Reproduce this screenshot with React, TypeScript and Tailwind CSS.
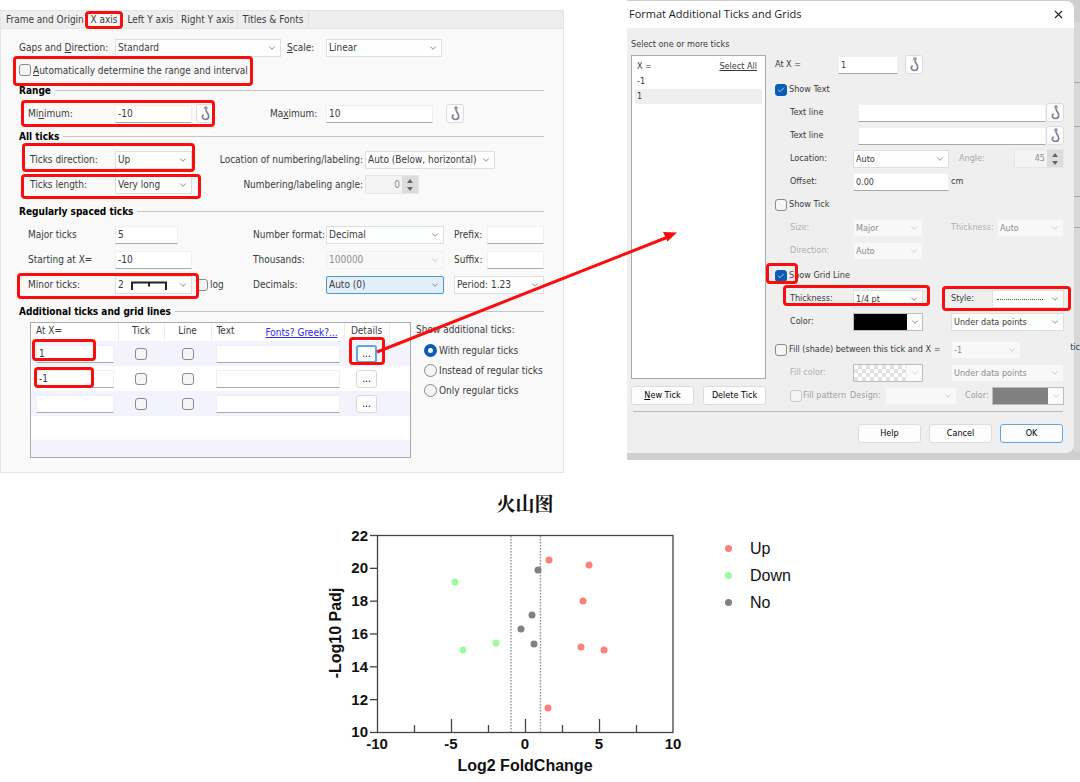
import * as React from 'react'
import clsx from 'clsx'
import { Check, ChevronDown, X } from 'lucide-react'

function Mark({ className }: { className?: string }) {
  return (
    <span
      className={clsx('pointer-events-none absolute z-10 rounded-[4px] border-3 border-[#fb0d0d]', className)}
    />
  )
}

function Hook() {
  return (
    <svg viewBox="0 0 12 16" className="h-[15px] w-[11px]" fill="none" stroke="#7b8098" strokeWidth="1.8">
      <circle cx="6.5" cy="2" r="1.2" strokeWidth="1.3" />
      <path d="M6.500 3.500c0 3 3 4.500 3 7.500c0 2.200-1.500 3.500-3.500 3.500S2.500 13.300 2.500 11.500c0-1 .6-1.700 1.700-1.700" />
    </svg>
  )
}

function HookButton({ label, className }: { label: string; className?: string }) {
  return (
    <button
      aria-label={label}
      className={clsx(
        'flex h-[19px] w-[18px] shrink-0 items-center justify-center rounded-[3px] border border-[#dcdcdc] bg-[#fdfdfd]',
        className
      )}
    >
      <Hook />
    </button>
  )
}

type SelectProps = {
  id?: string
  label?: string
  value: string
  className?: string
  disabled?: boolean
  active?: boolean
}

function Select({ id, label, value, className, disabled, active }: SelectProps) {
  return (
    <div className={clsx('relative', className)}>
      <select
        id={id}
        aria-label={label}
        disabled={disabled}
        className={clsx(
          'block h-[18px] w-full appearance-none border pr-4 pl-0.5 leading-4 opacity-100',
          active && 'rounded-[2px] border-[#4a97d6] bg-[#e2eefa]',
          disabled && 'border-[#f0f0f0] bg-[#f8f8f8] text-[#8d8d8d]',
          !active && !disabled && 'border-[#dedede] bg-[#fdfefe]'
        )}
      >
        <option>{value}</option>
      </select>
      <ChevronDown
        className={clsx(
          'pointer-events-none absolute top-1 right-1 size-[10px]',
          disabled ? 'text-[#c4c4c4]' : 'text-[#777777]'
        )}
      />
    </div>
  )
}

type TextBoxProps = { id?: string; label?: string; value?: string; className?: string }

function TextBox({ id, label, value, className }: TextBoxProps) {
  return (
    <input
      id={id}
      aria-label={label}
      type="text"
      defaultValue={value}
      className={clsx(
        'h-[18px] min-w-0 border border-b-[#a9a9a9] border-x-[#f0f0f0] border-t-[#f0f0f0] bg-white px-0.5',
        className
      )}
    />
  )
}

function Spinner({ id, value, className }: { id: string; value: string; className?: string }) {
  return (
    <div className={clsx('flex h-[19px] border border-[#e6e6e6]', className)}>
      <input
        id={id}
        type="text"
        disabled
        defaultValue={value}
        className="min-w-0 flex-1 bg-[#f4f4f4] pr-0.5 text-right text-[#8d8d8d]"
      />
      <div className="flex w-4 flex-col items-center justify-center gap-1 bg-[#dcdcdc]">
        <svg viewBox="0 0 6 4" className="h-1 w-1.5" fill="#666666">
          <path d="M0 4h6L3 0z" />
        </svg>
        <svg viewBox="0 0 6 4" className="h-1 w-1.5" fill="#666666">
          <path d="M0 0h6L3 4z" />
        </svg>
      </div>
    </div>
  )
}

type TickBoxProps = { id?: string; label?: string; checked?: boolean; disabled?: boolean }

function TickBox({ id, label, checked, disabled }: TickBoxProps) {
  return (
    <span className="relative flex size-3 shrink-0">
      <input
        id={id}
        aria-label={label}
        type="checkbox"
        defaultChecked={checked}
        disabled={disabled}
        className={clsx(
          'size-3 appearance-none rounded-[3px] border bg-[#f5f5f5] checked:border-[#0a5cb4] checked:bg-[#0a5cb4]',
          disabled ? 'border-[#c9c9c9]' : 'border-[#8a8a8a]'
        )}
      />
      {checked && <Check className="pointer-events-none absolute top-0.5 left-0.5 size-2 text-white" />}
    </span>
  )
}

type ColorPickProps = { label: string; swatch: string; disabled?: boolean; className?: string }

function ColorPick({ label, swatch, disabled, className }: ColorPickProps) {
  return (
    <button
      aria-label={label}
      disabled={disabled}
      className={clsx('flex h-[18px] border border-[#bdbdbd] bg-[#fbfbfb]', className)}
    >
      <span className={clsx('h-full flex-1', swatch)} />
      <span className="flex h-full w-[15px] items-center justify-center">
        <ChevronDown className={clsx('size-[10px]', disabled ? 'text-[#cccccc]' : 'text-[#777777]')} />
      </span>
    </button>
  )
}

function SectionHeader({ children, className }: { children: React.ReactNode; className?: string }) {
  return (
    <div className={clsx('flex h-[21px] items-center gap-1', className)}>
      <h2 className="font-bold text-black">{children}</h2>
      <div className="h-px flex-1 bg-[#c6c6c6]" />
    </div>
  )
}

const ROW = 'relative grid h-[25px] grid-cols-[96px_minmax(0,1fr)_218px] items-center'
const ROW_WIDE = 'relative grid h-[25px] grid-cols-[96px_minmax(0,1fr)_179px] items-center'

const tickRows = [{ at: '1' }, { at: '-1' }, { at: '' }]
const radios = ['With regular ticks', 'Instead of regular ticks', 'Only regular ticks']

function TickTable() {
  return (
    <div className="relative ml-[11px] h-[136px] w-[381px] shrink-0 border border-[#a9abb3] bg-white">
      <table className="w-full table-fixed border-collapse">
        <thead>
          <tr className="h-[18px] text-left align-top leading-4">
            <th className="w-[87px] border-r border-[#ececec] pl-[5px] font-normal">At X=</th>
            <th className="w-[46px] border-r border-[#ececec] text-center font-normal">Tick</th>
            <th className="w-[47px] border-r border-[#ececec] text-center font-normal">Line</th>
            <th className="w-[133px] border-r border-[#ececec] pl-[5px] font-normal">
              <div className="flex justify-between pr-1.5">
                <span>Text</span>
                <a href="#fonts" className="pt-0.5 leading-4 text-[#2a2af0] underline">
                  Fonts? Greek?...
                </a>
              </div>
            </th>
            <th className="w-[45px] border-r border-[#ececec] text-center font-normal">Details</th>
            <th />
          </tr>
        </thead>
        <tbody>
          {tickRows.map((row, i) => (
            <tr key={i} className="h-[25px] odd:bg-[#f3f3fd]">
              <td className="relative pl-[5px]">
                <TextBox label={`At X row ${i + 1}`} value={row.at} className="block w-[78px]" />
                {i === 0 && <Mark className="-top-0.5 left-px h-[22px] w-[64px]" />}
                {i === 1 && <Mark className="top-px left-[3px] h-[21px] w-[60px]" />}
              </td>
              <td>
                <div className="flex justify-center">
                  <TickBox label={`Tick row ${i + 1}`} />
                </div>
              </td>
              <td>
                <div className="flex justify-center">
                  <TickBox label={`Line row ${i + 1}`} />
                </div>
              </td>
              <td className="pl-[5px]">
                <TextBox label={`Text row ${i + 1}`} className="block w-[124px]" />
              </td>
              <td className="relative">
                <button
                  aria-label={`Details row ${i + 1}`}
                  className={clsx(
                    'mx-auto block h-[18px] w-[21px] rounded-[3px] border bg-[#fdfdfd] text-black',
                    i === 0 ? 'border-2 border-[#5fa8e0] leading-3' : 'border-[#d9d9d9] leading-4'
                  )}
                >
                  ...
                </button>
                {i === 0 && <Mark className="-top-1 left-[5px] h-[28px] w-[36px]" />}
              </td>
              <td />
            </tr>
          ))}
          <tr className="h-[24px]">
            <td colSpan={6} />
          </tr>
          <tr className="h-[17px] bg-[#f3f3fd]">
            <td colSpan={6} />
          </tr>
        </tbody>
      </table>
    </div>
  )
}

function AxisPanel() {
  return (
    <section className="mt-[10px] h-[463px] border border-[#e4e4e4] bg-[#f9f9f9] text-[10px] whitespace-nowrap">
      <nav className="flex h-[17px] bg-[#eeeeee] leading-4">
        <button className="w-[83px] shrink-0 pl-[5px] text-left">Frame and Origin</button>
        <button className="relative w-[40px] shrink-0 bg-[#f9f9f9]">
          X axis
          <Mark className="top-0 left-px h-[18px] w-[38px]" />
        </button>
        <button className="w-[54px] shrink-0 border-r border-[#e0e0e0]">Left Y axis</button>
        <button className="w-[60px] shrink-0 border-r border-[#e0e0e0]">Right Y axis</button>
        <button className="w-[71px] shrink-0 border-r border-[#e0e0e0]">Titles &amp; Fonts</button>
      </nav>
      <div className="border-t border-[#e4e4e4] pt-[6px] pr-[19px] pl-[18px]">
        <div className={ROW}>
          <label htmlFor="gaps">
            Gaps and <u>D</u>irection:
          </label>
          <div className="flex items-center gap-1.5">
            <Select id="gaps" value="Standard" className="flex-1" />
            <label htmlFor="scale" className="w-[39px]">
              <u>S</u>cale:
            </label>
          </div>
          <Select id="scale" value="Linear" className="w-[116px]" />
        </div>
        <div className="relative flex h-5 items-center gap-0.5">
          <TickBox id="auto" />
          <label htmlFor="auto">
            <u>A</u>utomatically determine the range and interval
          </label>
          <Mark className="-top-1 -left-1.5 h-[30px] w-[240px]" />
        </div>
        <SectionHeader>Range</SectionHeader>
        <div className={ROW}>
          <label htmlFor="min" className="pl-[9px]">
            Mi<u>n</u>imum:
          </label>
          <div className="flex items-center">
            <TextBox id="min" value="-10" className="w-[77px]" />
            <HookButton label="Hook minimum" className="ml-1" />
            <label htmlFor="max" className="ml-auto w-[56px]">
              Ma<u>x</u>imum:
            </label>
          </div>
          <div className="flex items-center gap-[13px]">
            <TextBox id="max" value="10" className="w-[107px]" />
            <HookButton label="Hook maximum" />
          </div>
          <Mark className="-top-px left-0.5 h-[27px] w-[194px]" />
        </div>
        <SectionHeader>All ticks</SectionHeader>
        <div className={ROW_WIDE}>
          <label htmlFor="direction" className="pl-[11px]">
            Ticks direction:
          </label>
          <div className="flex items-center justify-between pr-0.5">
            <Select id="direction" value="Up" className="w-[77px]" />
            <label htmlFor="location">Location of numbering/labeling:</label>
          </div>
          <Select id="location" value="Auto (Below, horizontal)" className="w-[130px]" />
          <Mark className="-top-1 left-[3px] h-[29px] w-[173px]" />
        </div>
        <div className={ROW_WIDE}>
          <label htmlFor="length" className="pl-[11px]">
            Ticks length:
          </label>
          <div className="flex items-center justify-between pr-0.5">
            <Select id="length" value="Very long" className="w-[77px]" />
            <label htmlFor="angle">Numbering/labeling angle:</label>
          </div>
          <Spinner id="angle" value="0" className="w-[54px]" />
          <Mark className="top-0.5 left-0.5 h-[25px] w-[180px]" />
        </div>
        <SectionHeader className="mt-1">Regularly spaced ticks</SectionHeader>
        <div className={ROW}>
          <label htmlFor="major" className="pl-[9px]">
            Major ticks
          </label>
          <div className="flex items-center justify-between">
            <TextBox id="major" value="5" className="w-[63px]" />
            <label htmlFor="format" className="w-[73px]">
              Number format:
            </label>
          </div>
          <div className="flex items-center gap-[10px]">
            <Select id="format" value="Decimal" className="w-[118px] shrink-0" />
            <div className="flex flex-1 items-center justify-between">
              <label htmlFor="prefix">Prefix:</label>
              <TextBox id="prefix" className="w-[57px]" />
            </div>
          </div>
        </div>
        <div className={ROW}>
          <label htmlFor="start" className="pl-[9px]">
            Starting at X=
          </label>
          <div className="flex items-center justify-between">
            <TextBox id="start" value="-10" className="w-[77px]" />
            <label htmlFor="thousands" className="w-[73px]">
              Thousands:
            </label>
          </div>
          <div className="flex items-center gap-[10px]">
            <Select id="thousands" value="100000" disabled className="w-[118px] shrink-0" />
            <div className="flex flex-1 items-center justify-between">
              <label htmlFor="suffix">Suffix:</label>
              <TextBox id="suffix" className="w-[57px]" />
            </div>
          </div>
        </div>
        <div className={ROW}>
          <label htmlFor="minor" className="pl-[9px]">
            Minor ticks:
          </label>
          <div className="flex items-center">
            <div className="relative w-[77px]">
              <Select id="minor" value="2" />
              <svg
                viewBox="0 0 36 9"
                className="pointer-events-none absolute top-[5px] left-4 h-[9px] w-9"
                fill="none"
                stroke="#222222"
                strokeWidth="2"
              >
                <path d="M1 9V1.500h34V9M18 1v4.500" />
              </svg>
            </div>
            <div className="ml-1 flex items-center gap-0.5">
              <TickBox id="log" />
              <label htmlFor="log">log</label>
            </div>
            <label htmlFor="decimals" className="ml-auto w-[73px]">
              Decimals:
            </label>
          </div>
          <div className="flex items-center gap-[10px]">
            <Select id="decimals" value="Auto (0)" active className="w-[118px]" />
            <Select label="Decimal mark" value="Period: 1.23" className="flex-1" />
          </div>
          <Mark className="top-px -left-0.5 h-[26px] w-[182px]" />
        </div>
        <SectionHeader className="mt-1">Additional ticks and grid lines</SectionHeader>
        <div className="flex gap-[5px]">
          <TickTable />
          <fieldset>
            <legend className="h-[18px] leading-4">Show additional ticks:</legend>
            {radios.map((text, i) => (
              <label key={text} className="ml-2 flex h-5 items-center gap-0.5">
                <input
                  type="radio"
                  name="show"
                  defaultChecked={i === 0}
                  className="size-[13px] shrink-0 appearance-none rounded-full border border-[#8a8a8a] bg-[#f5f5f5] checked:border-4 checked:border-[#0a5cb4] checked:bg-white"
                />
                {text}
              </label>
            ))}
          </fieldset>
        </div>
      </div>
    </section>
  )
}

const DROW = 'relative grid h-[23px] grid-cols-[78px_minmax(0,1fr)_113px] items-center'
const BUTTON = 'h-[19px] w-[63px] rounded-[3px] border bg-[#fdfdfd] text-black'

function TicksDialog() {
  return (
    <section className="relative h-[460px] bg-[#cfcfcf] pt-px pr-[6px]">
      <div className="absolute top-[22px] right-0 h-[430px] w-[6px] bg-[#d8d8d8]">
        <div className="mt-[60px] h-px bg-[#a5a5a5]" />
        <div className="mt-[43px] h-px bg-[#a5a5a5]" />
        <div className="mt-[69px] h-px bg-[#a5a5a5]" />
        <div className="mt-[30px] h-px bg-[#a5a5a5]" />
      </div>
      <span className="absolute top-[341px] right-0 z-10 leading-3">tic</span>
      <div className="relative h-[452px] rounded-r-lg bg-[#efefef]">
        <header className="flex h-[27px] items-center justify-between rounded-tr-lg bg-white pr-[9px] pl-0.5">
          <h1 className="font-['Open_Sans',sans-serif] text-[11px] text-[#1c1c1c]">Format Additional Ticks and Grids</h1>
          <button aria-label="Close">
            <X className="size-[13px] text-[#222222]" />
          </button>
        </header>
        <div className="flex gap-[9px] pr-[10px] pl-1">
          <div className="w-[135px] shrink-0">
            <h2 className="flex h-[27px] items-center pt-1.5 whitespace-nowrap">Select one or more ticks</h2>
            <div className="h-[324px] border border-[#a9abb3] bg-white px-[3px] pt-[3px]">
              <div className="flex h-[15px] items-center justify-between pr-[5px] pl-0.5">
                <span>X =</span>
                <a href="#all" className="underline">
                  Select All
                </a>
              </div>
              <ul>
                <li className="h-[15px] pl-0.5 leading-[15px]">-1</li>
                <li className="h-[15px] bg-[#efefef] pl-0.5 leading-[15px]">1</li>
              </ul>
            </div>
            <div className="mt-[7px] flex justify-between">
              <button className={clsx(BUTTON, 'border-[#dcdcdc]')}>
                <u>N</u>ew Tick
              </button>
              <button className={clsx(BUTTON, 'border-[#dcdcdc]')}>Delete Tick</button>
            </div>
          </div>
          <div className="min-w-0 flex-1 pt-[25px]">
            <div className="flex h-[23px] items-center">
              <label htmlFor="atx" className="w-[63px]">
                At X =
              </label>
              <TextBox id="atx" value="1" className="w-[60px]" />
              <HookButton label="Hook position" className="ml-[7px]" />
            </div>
            <div className="mt-0.5 flex h-[23px] items-center gap-0.5">
              <TickBox id="showText" checked />
              <label htmlFor="showText">Show Text</label>
            </div>
            {['line1', 'line2'].map((id) => (
              <div key={id} className="flex h-[23px] items-center pl-[15px]">
                <label htmlFor={id} className="w-[68px] shrink-0">
                  Text line
                </label>
                <TextBox id={id} className="flex-1" />
                <HookButton label={`Hook ${id}`} />
              </div>
            ))}
            <div className={DROW}>
              <label htmlFor="loc" className="pl-[15px]">
                Location:
              </label>
              <Select id="loc" value="Auto" className="w-[96px]" />
              <div className="flex items-center justify-between pl-2">
                <label htmlFor="ang" className="text-[#a8a8a8]">
                  Angle:
                </label>
                <Spinner id="ang" value="45" className="w-[50px]" />
              </div>
            </div>
            <div className={DROW}>
              <label htmlFor="offset" className="pl-[15px]">
                Offset:
              </label>
              <TextBox id="offset" value="0.00" className="w-[96px]" />
              <span>cm</span>
            </div>
            <div className="flex h-[23px] items-center gap-0.5">
              <TickBox id="showTick" />
              <label htmlFor="showTick">Show Tick</label>
            </div>
            <div className={clsx(DROW, 'text-[#b0b0b0]')}>
              <label htmlFor="size" className="pl-[15px]">
                Size:
              </label>
              <Select id="size" value="Major" disabled className="w-[70px]" />
              <div className="flex items-center justify-between">
                <label htmlFor="tickThick">Thickness:</label>
                <Select id="tickThick" value="Auto" disabled className="w-[67px]" />
              </div>
            </div>
            <div className={clsx(DROW, 'text-[#b0b0b0]')}>
              <label htmlFor="dir" className="pl-[15px]">
                Direction:
              </label>
              <Select id="dir" value="Auto" disabled className="w-[70px]" />
            </div>
            <div className="relative mt-0.5 flex h-[23px] items-center gap-0.5">
              <TickBox id="showGrid" checked />
              <label htmlFor="showGrid">Show Grid Line</label>
              <Mark className="-top-px -left-[9px] h-[21px] w-[32px]" />
            </div>
            <div className={DROW}>
              <label htmlFor="gridThick" className="pl-[15px]">
                Thickness:
              </label>
              <Select id="gridThick" value="1/4 pt" className="w-[70px]" />
              <div className="flex items-center justify-between">
                <label htmlFor="style">Style:</label>
                <div className="relative w-[72px]">
                  <Select id="style" value="" />
                  <div className="pointer-events-none absolute top-[9px] left-[5px] w-[46px] border-t border-dotted border-[#555555]" />
                </div>
              </div>
              <Mark className="-top-0.5 left-2 h-[21px] w-[147px]" />
              <Mark className="-top-px -right-[7px] h-[25px] w-[129px]" />
            </div>
            <div className={DROW}>
              <span className="pl-[15px]">Color:</span>
              <ColorPick label="Grid line color" swatch="bg-black" className="w-[70px]" />
              <Select label="Grid line order" value="Under data points" />
            </div>
            <div className="mt-[5px] grid h-[23px] grid-cols-[minmax(0,1fr)_113px] items-center">
              <div className="flex items-center gap-0.5 whitespace-nowrap">
                <TickBox id="fill" />
                <label htmlFor="fill">Fill (shade) between this tick and X =</label>
              </div>
              <Select label="Fill to X" value="-1" disabled className="w-[70px]" />
            </div>
            <div className={clsx(DROW, 'text-[#b0b0b0]')}>
              <span className="pl-[15px]">Fill color:</span>
              <ColorPick
                label="Fill color"
                disabled
                swatch="bg-[repeating-conic-gradient(#e2e2e2_0_25%,#ffffff_0_50%)] bg-[length:8px_8px]"
                className="w-[70px]"
              />
              <Select label="Fill order" value="Under data points" disabled />
            </div>
            <div className="flex h-[23px] items-center pl-[15px] whitespace-nowrap text-[#a0a0a0]">
              <TickBox id="pattern" disabled />
              <label htmlFor="pattern" className="ml-px w-[47px]">
                Fill pattern
              </label>
              <label htmlFor="design" className="w-[35px]">
                Design:
              </label>
              <Select id="design" value="" disabled className="w-[72px]" />
              <span className="ml-2">Color:</span>
              <ColorPick label="Pattern color" disabled swatch="bg-[#808080]" className="ml-auto w-[72px]" />
            </div>
          </div>
        </div>
        <div className="mt-1 mr-[11px] ml-1.5 h-px bg-[#bcbcbc]" />
        <footer className="mt-3 flex justify-end gap-2 pr-[11px]">
          <button className={clsx(BUTTON, 'border-[#dcdcdc]')}>Help</button>
          <button className={clsx(BUTTON, 'border-[#dcdcdc]')}>Cancel</button>
          <button className={clsx(BUTTON, 'border-[#5fa8e0]')}>OK</button>
        </footer>
      </div>
    </section>
  )
}

const UP = '#fb8078'
const DOWN = '#9dfb9d'
const NO = '#808080'

const points = [
  { x: 549, y: 560, color: UP },
  { x: 589, y: 565, color: UP },
  { x: 583, y: 601, color: UP },
  { x: 581, y: 647, color: UP },
  { x: 604, y: 650, color: UP },
  { x: 548, y: 708, color: UP },
  { x: 455, y: 582, color: DOWN },
  { x: 496, y: 643, color: DOWN },
  { x: 463, y: 650, color: DOWN },
  { x: 538, y: 570, color: NO },
  { x: 532, y: 615, color: NO },
  { x: 521, y: 629, color: NO },
  { x: 534, y: 644, color: NO },
]

const legend = [
  { name: 'Up', color: 'bg-[#fb8078]' },
  { name: 'Down', color: 'bg-[#9dfb9d]' },
  { name: 'No', color: 'bg-[#808080]' },
]

function VolcanoChart() {
  return (
    <section className="flex justify-center pl-[31px] font-['Liberation_Sans',sans-serif] text-[16px] text-[#111111]">
      <svg
        viewBox="320 481 376 301"
        className="h-[301px] w-[376px] shrink-0"
        fill="none"
        stroke="#444444"
        strokeWidth="1.3"
      >
        <rect x="377.5" y="535.5" width="295.5" height="197" />
        {[22, 20, 18, 16, 14, 12, 10].map((v, i) => (
          <React.Fragment key={v}>
            <path d={`M370 ${535.5 + i * 32.83}h8`} />
            <text x="368" y={540.5 + i * 32.83} textAnchor="end" fill="#111111" stroke="none" fontSize="15" fontWeight="700">
              {v}
            </text>
          </React.Fragment>
        ))}
        {[414.5, 451.5, 488.5, 525.5, 562.5, 599.5, 636.5].map((x, i) => (
          <path key={x} d={`M${x} 732v${i % 2 ? -13 : -7}`} />
        ))}
        {[-10, -5, 0, 5, 10].map((v, i) => (
          <text key={v} x={377 + i * 74} y="749" textAnchor="middle" fill="#111111" stroke="none" fontSize="15" fontWeight="700">
            {v}
          </text>
        ))}
        <path d="M511 536v196M540.500 536v196" stroke="#888888" strokeDasharray="1.5 1.5" />
        {points.map((p) => (
          <circle key={`${p.x}-${p.y}`} cx={p.x} cy={p.y} r="3.5" fill={p.color} stroke="none" />
        ))}
        <g fill="#111111" stroke="none" fontWeight="700" textAnchor="middle">
          <text x="525" y="511" fontSize="19" fontFamily="'Noto Serif CJK SC', 'Noto Sans CJK SC', serif">
            火山图
          </text>
          <text x="525" y="771" fontSize="16">
            Log2 FoldChange
          </text>
          <text transform="translate(341 633) rotate(-90)" fontSize="16">
            -Log10 Padj
          </text>
        </g>
      </svg>
      <ul className="mt-[54px] ml-[29px]">
        {legend.map((item) => (
          <li key={item.name} className="flex h-[27px] items-center gap-[18px]">
            <span className={clsx('size-[7px] rounded-full', item.color)} />
            {item.name}
          </li>
        ))}
      </ul>
    </section>
  )
}

export default function App() {
  return (
    <main className="min-h-screen bg-white font-['DejaVu_Sans_Condensed','Noto_Sans',sans-serif] text-[9px] text-[#3a3a3a]">
      <div className="relative grid grid-cols-[564fr_453fr] gap-[63px]">
        <AxisPanel />
        <TicksDialog />
        <svg viewBox="0 0 1080 460" className="pointer-events-none absolute top-0 left-0 z-20 w-full">
          <path d="M377 352L668 237" stroke="#fb0d0d" strokeWidth="3" />
          <path d="M677 232.500l-9.500 9-4.500-9.500z" fill="#fb0d0d" />
        </svg>
      </div>
      <div className="pt-2">
        <VolcanoChart />
      </div>
    </main>
  )
}
